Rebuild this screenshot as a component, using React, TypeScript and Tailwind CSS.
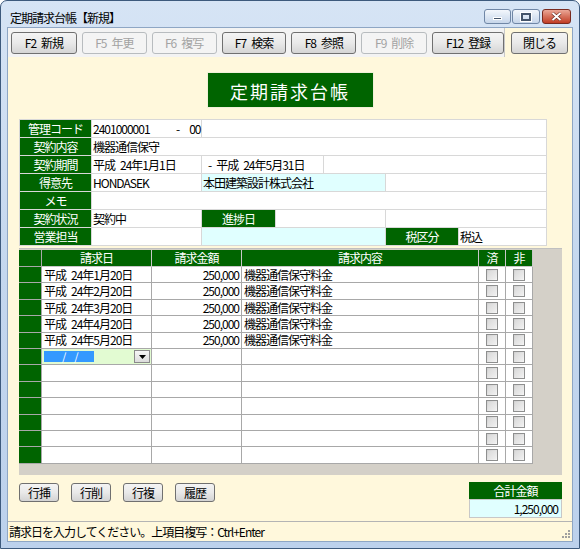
import React from 'react';

const S = '\u2002';

const data = [
  { d: `平成${S}24年1月20日`, a: '250,000', c: '機器通信保守料金' },
  { d: `平成${S}24年2月20日`, a: '250,000', c: '機器通信保守料金' },
  { d: `平成${S}24年3月20日`, a: '250,000', c: '機器通信保守料金' },
  { d: `平成${S}24年4月20日`, a: '250,000', c: '機器通信保守料金' },
  { d: `平成${S}24年5月20日`, a: '250,000', c: '機器通信保守料金' },
];

function TBtn({ children, w, disabled }: { children: React.ReactNode; w: string; disabled?: boolean }) {
  return (
    <div
      className={
        w +
        ' h-[22px] rounded-[3px] border flex items-center justify-center whitespace-pre ' +
        (disabled
          ? 'border-[#b8bcbf] bg-[#f4f4f4] text-[#a3a3a3]'
          : 'border-[#707070] bg-linear-to-b from-[#f4f4f4] via-[#e9e9e9] to-[#d5d5d5] text-black')
      }
    >
      {children}
    </div>
  );
}

function SBtn({ children }: { children: React.ReactNode }) {
  return (
    <div className="w-[40px] h-[19px] rounded-[3px] border border-[#707070] bg-linear-to-b from-[#f4f4f4] via-[#e9e9e9] to-[#d3d3d3] flex items-center justify-center">
      {children}
    </div>
  );
}

function Lbl({ children, w }: { children: React.ReactNode; w: string }) {
  return (
    <div className={w + ' h-full bg-[#006400] text-white flex items-center justify-center border-r border-b border-[#d8d8d8]'}>
      {children}
    </div>
  );
}

function Cell({ children, w, cyan }: { children?: React.ReactNode; w: string; cyan?: boolean }) {
  return (
    <div
      className={
        w +
        ' h-full flex items-center pl-[1px] whitespace-pre border-r border-b border-[#d8d8d8] ' +
        (cyan ? 'bg-[#e0ffff]' : 'bg-white')
      }
    >
      {children}
    </div>
  );
}

function Check() {
  return (
    <div className="w-[12px] h-[12px] border border-[#8e8f8f] bg-linear-to-br from-[#cfcfcf] to-[#f7f7f7] flex items-center justify-center">
      <div className="w-[8px] h-[8px] bg-linear-to-br from-[#dadada] to-[#efefef]" />
    </div>
  );
}

function GridRow({ r, edit }: { r?: { d: string; a: string; c: string }; edit?: boolean }) {
  return (
    <div className="flex h-[16.42px]">
      <div className="w-[23px] h-full bg-[#006400] border-r border-b border-[#a8a8a8]" />
      {edit ? (
        <div className="w-[110px] h-full bg-[#e2fbd2] border-r border-b border-[#a8a8a8] flex items-center pl-[2px] pr-[1px] justify-between">
          <div className="w-[50px] h-[11px] bg-[#3399ff] text-white text-[11px] leading-[11px] flex items-center pl-[18px] whitespace-pre">{`/${S}${S}/`}</div>
          <div className="w-[16px] h-[13px] border border-[#8a8a8a] bg-linear-to-b from-[#f6f6f6] to-[#dcdcdc] flex items-center justify-center">
            <svg width="7" height="4" viewBox="0 0 7 4"><path d="M0 0h7L3.5 4z" fill="#000" /></svg>
          </div>
        </div>
      ) : (
        <div className="w-[110px] h-full bg-white border-r border-b border-[#a8a8a8] flex items-center pl-[2px] whitespace-pre">{r?.d}</div>
      )}
      <div className="w-[90px] h-full bg-white border-r border-b border-[#a8a8a8] flex items-center justify-end pr-[2px]">{r?.a}</div>
      <div className="w-[237px] h-full bg-white border-r border-b border-[#a8a8a8] flex items-center pl-[2px]">{r?.c}</div>
      <div className="w-[27px] h-full bg-white border-r border-b border-[#a8a8a8] flex items-center justify-center"><Check /></div>
      <div className="w-[27px] h-full bg-white border-r border-b border-[#a8a8a8] flex items-center justify-center"><Check /></div>
    </div>
  );
}

export default function App() {
  return (
    <div className="w-[580px] h-[549px] bg-white font-['Noto_Sans_CJK_JP','Noto_Sans',sans-serif] text-[12px] leading-none tracking-[-1px] text-black">
      <div className="w-full h-full rounded-t-[7px] border border-[#3d5a7d] bg-linear-to-b from-[#d6e4f5] via-[#c4d7ee] to-[#bcd1ec] flex flex-col px-[6px] pb-[6px]">
        {/* title bar */}
        <div className="h-[27px] flex items-start justify-between">
          <div className="mt-[11px] ml-[3px] text-[12px] text-black">定期請求台帳【新規】</div>
          <div className="flex mt-[8px] mr-[2px] gap-[1px]">
            <div className="w-[27px] h-[15px] rounded-[3px] border border-[#6f86a6] bg-linear-to-b from-[#f3f7fc] via-[#dce6f3] to-[#c7d6ea] flex items-end justify-center pb-[3px]">
              <div className="w-[9px] h-[3px] bg-[#44546a] border border-white" />
            </div>
            <div className="w-[28px] h-[15px] rounded-[3px] border border-[#6f86a6] bg-linear-to-b from-[#f3f7fc] via-[#dce6f3] to-[#c7d6ea] flex items-center justify-center">
              <div className="w-[10px] h-[8px] border-2 border-[#44546a] outline outline-white" />
            </div>
            <div className="w-[29px] h-[15px] ml-[1px] rounded-[3px] border border-[#7a2b20] bg-linear-to-b from-[#eaa797] via-[#d5705b] to-[#c13c22] flex items-center justify-center">
              <svg width="11" height="9" viewBox="0 0 11 9">
                <path d="M1.5 1l8 7M9.5 1l-8 7" stroke="#5a1c12" strokeWidth="3" />
                <path d="M1.5 1l8 7M9.5 1l-8 7" stroke="#fff" strokeWidth="2" />
              </svg>
            </div>
          </div>
        </div>
        {/* client */}
        <div className="flex-1 flex flex-col border border-[#8ea6c4]">
          {/* toolbar */}
          <div className="h-[29px] flex">
            <div className="w-[497px] h-full bg-[#f3f3f3] border-r border-[#c8c8c8] flex items-center pl-[3px] gap-[5px]">
              <TBtn w="w-[66px]">{`F2${S}新規`}</TBtn>
              <TBtn w="w-[65px]" disabled>{`F5${S}年更`}</TBtn>
              <TBtn w="w-[65px]" disabled>{`F6${S}複写`}</TBtn>
              <TBtn w="w-[65px]">{`F7${S}検索`}</TBtn>
              <TBtn w="w-[65px]">{`F8${S}参照`}</TBtn>
              <TBtn w="w-[66px]" disabled>{`F9${S}削除`}</TBtn>
              <TBtn w="w-[72px]">{`F12${S}登録`}</TBtn>
            </div>
            <div className="flex-1 h-full bg-[#fff8dc] flex items-center pl-[6px]">
              <TBtn w="w-[57px]">閉じる</TBtn>
            </div>
          </div>
          {/* content */}
          <div className="h-[464px] bg-[#fff8dc] flex flex-col">
            <div className="mt-[15px] mx-auto w-[167px] h-[36px] bg-[#006400] border border-[#f0f0d8] text-white text-[18px] tracking-[2px] flex items-center justify-center pt-[1px]">
              定期請求台帳
            </div>
            {/* form */}
            <div className="mt-[11px] ml-[11px] w-[528px] border-t border-l border-[#d8d8d8] flex flex-col">
              <div className="flex h-[18px]">
                <Lbl w="w-[72px]">管理コード</Lbl>
                <Cell w="w-[110px]"><span className="w-[83px]">2401000001</span><span>{`-${S}${S}00`}</span></Cell>
                <Cell w="flex-1" />
              </div>
              <div className="flex h-[18px]">
                <Lbl w="w-[72px]">契約内容</Lbl>
                <Cell w="flex-1">機器通信保守</Cell>
              </div>
              <div className="flex h-[18px]">
                <Lbl w="w-[72px]">契約期間</Lbl>
                <Cell w="w-[110px]">{`平成${S}24年1月1日`}</Cell>
                <Cell w="w-[122px]"><span className="pl-[5px]">{`-${S}平成${S}24年5月31日`}</span></Cell>
                <Cell w="flex-1" />
              </div>
              <div className="flex h-[18px]">
                <Lbl w="w-[72px]">得意先</Lbl>
                <Cell w="w-[110px]">HONDASEK</Cell>
                <Cell w="w-[184px]" cyan>本田建築設計株式会社</Cell>
                <Cell w="flex-1" />
              </div>
              <div className="flex h-[18px]">
                <Lbl w="w-[72px]">メモ</Lbl>
                <Cell w="flex-1" />
              </div>
              <div className="flex h-[18px]">
                <Lbl w="w-[72px]">契約状況</Lbl>
                <Cell w="w-[110px]">契約中</Cell>
                <Lbl w="w-[74px]">進捗日</Lbl>
                <Cell w="w-[110px]" />
                <Cell w="flex-1" />
              </div>
              <div className="flex h-[18px]">
                <Lbl w="w-[72px]">営業担当</Lbl>
                <Cell w="w-[110px]" />
                <Cell w="w-[184px]" cyan />
                <Lbl w="w-[73px]">税区分</Lbl>
                <Cell w="flex-1">税込</Cell>
              </div>
            </div>
            {/* grid */}
            <div className="mt-[2px] ml-[11px] w-[543px] h-[227px] bg-[#d4d0c8] pt-[1px] border-t border-[#c0c0c0]">
              <div className="flex h-[17px] text-white">
                <div className="w-[23px] h-full bg-[#006400] border-r border-b border-[#a8a8a8]" />
                <div className="w-[110px] h-full bg-[#006400] border-r border-b border-[#c8c8c8] flex items-center justify-center">請求日</div>
                <div className="w-[90px] h-full bg-[#006400] border-r border-b border-[#c8c8c8] flex items-center justify-center">請求金額</div>
                <div className="w-[237px] h-full bg-[#006400] border-r border-b border-[#c8c8c8] flex items-center justify-center">請求内容</div>
                <div className="w-[27px] h-full bg-[#006400] border-r border-b border-[#c8c8c8] flex items-center justify-center">済</div>
                <div className="w-[27px] h-full bg-[#006400] border-r border-b border-[#c8c8c8] flex items-center justify-center">非</div>
              </div>
              {data.map((r, i) => (
                <GridRow key={i} r={r} />
              ))}
              <GridRow edit />
              {[0, 1, 2, 3, 4, 5].map((i) => (
                <GridRow key={'e' + i} />
              ))}
            </div>
            {/* bottom */}
            <div className="mt-[7px] flex justify-between items-start">
              <div className="ml-[11px] mt-[1px] flex gap-[12px]">
                <SBtn>行挿</SBtn>
                <SBtn>行削</SBtn>
                <SBtn>行複</SBtn>
                <SBtn>履歴</SBtn>
              </div>
              <div className="mr-[10px] w-[93px] flex flex-col">
                <div className="h-[17px] bg-[#006400] text-white flex items-center justify-center">合計金額</div>
                <div className="h-[19px] bg-[#e0ffff] border border-[#c8c8c8] flex items-center justify-end pr-[3px]">1,250,000</div>
              </div>
            </div>
          </div>
          {/* status bar */}
          <div className="h-[20px] bg-[#fff8dc] border-t border-[#b4b4b4] flex items-center justify-between pl-[1px]">
            <span>請求日を入力してください。上項目複写：Ctrl+Enter</span>
            <svg width="10" height="10" viewBox="0 0 10 10" className="self-end mb-[2px] mr-[1px]">
              <rect x="7" y="1" width="2" height="2" fill="#a0a0a0" />
              <rect x="4" y="4" width="2" height="2" fill="#a0a0a0" />
              <rect x="7" y="4" width="2" height="2" fill="#a0a0a0" />
              <rect x="1" y="7" width="2" height="2" fill="#a0a0a0" />
              <rect x="4" y="7" width="2" height="2" fill="#a0a0a0" />
              <rect x="7" y="7" width="2" height="2" fill="#a0a0a0" />
            </svg>
          </div>
        </div>
      </div>
    </div>
  );
}
